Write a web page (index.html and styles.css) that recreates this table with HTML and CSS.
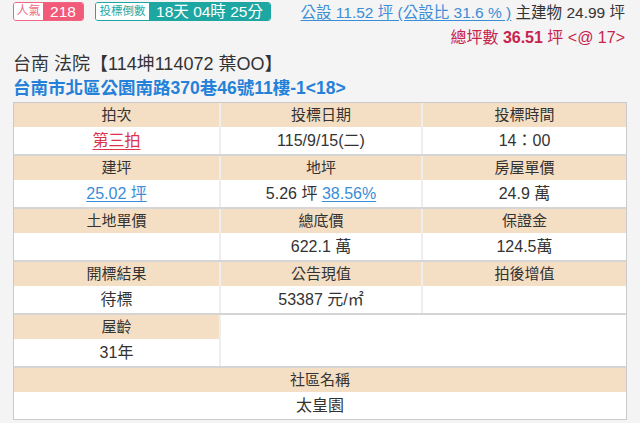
FILE: index.html
```html
<!DOCTYPE html>
<html lang="zh-Hant">
<head>
<meta charset="utf-8">
<link rel="stylesheet" href="styles.css">
</head>
<body>
<div class="page">
  <div class="top">
    <div class="badges">
      <span class="badge pink"><span class="b-label">人氣</span><span class="b-val">218</span></span>
      <span class="badge teal"><span class="b-label">投標倒數</span><span class="b-val">18天 04時 25分</span></span>
    </div>
    <div class="area">
      <div class="area-line"><a class="link-blue">公設 11.52 坪 (公設比 31.6 % )</a> 主建物 24.99 坪</div>
      <div class="area-line total">總坪數 <b>36.51</b> 坪 &lt;@ 17&gt;</div>
    </div>
  </div>
  <div class="title">台南 法院【114坤114072 葉OO】</div>
  <div class="address">台南市北區公園南路370巷46號11樓-1&lt;18&gt;</div>
  <div class="info">
    <div class="row">
      <div class="cell"><div class="th">拍次</div><div class="td"><a class="link-red">第三拍</a></div></div>
      <div class="cell"><div class="th">投標日期</div><div class="td">115/9/15(二)</div></div>
      <div class="cell"><div class="th">投標時間</div><div class="td">14：00</div></div>
    </div>
    <div class="row">
      <div class="cell"><div class="th">建坪</div><div class="td"><a class="link-blue">25.02 坪</a></div></div>
      <div class="cell"><div class="th">地坪</div><div class="td">5.26 坪 <a class="link-blue">38.56%</a></div></div>
      <div class="cell"><div class="th">房屋單價</div><div class="td">24.9 萬</div></div>
    </div>
    <div class="row">
      <div class="cell"><div class="th">土地單價</div><div class="td"></div></div>
      <div class="cell"><div class="th">總底價</div><div class="td">622.1 萬</div></div>
      <div class="cell"><div class="th">保證金</div><div class="td">124.5萬</div></div>
    </div>
    <div class="row">
      <div class="cell"><div class="th">開標結果</div><div class="td">待標</div></div>
      <div class="cell"><div class="th">公告現值</div><div class="td">53387 元/㎡</div></div>
      <div class="cell"><div class="th">拍後增值</div><div class="td"></div></div>
    </div>
    <div class="row">
      <div class="cell"><div class="th">屋齡</div><div class="td">31年</div></div>
      <div class="cell span2"></div>
    </div>
    <div class="row">
      <div class="cell span3"><div class="th">社區名稱</div><div class="td">太皇園</div></div>
    </div>
  </div>
</div>
</body>
</html>
```

FILE: styles.css
```css
* { box-sizing: border-box; }
html, body { margin: 0; padding: 0; }
body {
  background: #f4f4f4;
  font-family: "Liberation Sans", "Noto Sans CJK TC", sans-serif;
  color: #333;
}
.page { padding: 2px 13px 0 13px; }
.top { display: flex; justify-content: space-between; align-items: flex-start; height: 50px; }
.badges { display: flex; gap: 11px; }
.badge { display: flex; height: 19px; border-radius: 3px; overflow: hidden; border: 1px solid; white-space: nowrap; }
.badge.pink { border-color: #f06581; }
.badge.teal { border-color: #1ea7a2; }
.b-label { background: #fff; font-size: 12px; line-height: 17px; text-align: center; }
.pink .b-label { color: #ee6b85; width: 29px; }
.teal .b-label { color: #1ea7a2; width: 53px; font-size: 11.5px; }
.b-val { color: #fff; font-size: 15.5px; line-height: 17px; text-align: center; }
.pink .b-val { background: #f25a79; width: 40px; }
.teal .b-val { background: #1ea7a2; width: 121px; }
.area { text-align: right; margin-right: 2px; }
.area-line { font-size: 15.5px; line-height: 19px; height: 19px; margin-top: 1px; white-space: nowrap; }
.area-line + .area-line { margin-top: 6px; font-size: 16px; }
.link-blue { color: #3b8dd6; text-decoration: underline; text-underline-offset: 2px; }
.link-red { color: #d9344a; text-decoration: underline; text-underline-offset: 3px; }
.total { color: #c8234e; }
.total b { font-weight: bold; }
.title { font-size: 18px; line-height: 24px; color: #333; }
.address { font-size: 17.5px; line-height: 24px; font-weight: bold; color: #2581d8; }
.info {
  margin-top: 2px;
  width: 614px;
  background: #fff;
  border: 1px solid #cacaca;
}
.row { display: grid; grid-template-columns: 205px 202px 1fr; }
.row + .row { border-top: 2px solid #d5d5d5; }
.cell { text-align: center; }
.cell + .cell { border-left: 2px solid #eeeeee; }
.span2 { grid-column: span 2; }
.span3 { grid-column: span 3; }
.th { background: #f5dfc4; height: 24px; line-height: 24px; font-size: 15px; color: #333; }
.td { height: 27px; line-height: 27px; font-size: 16px; color: #333; }
```
